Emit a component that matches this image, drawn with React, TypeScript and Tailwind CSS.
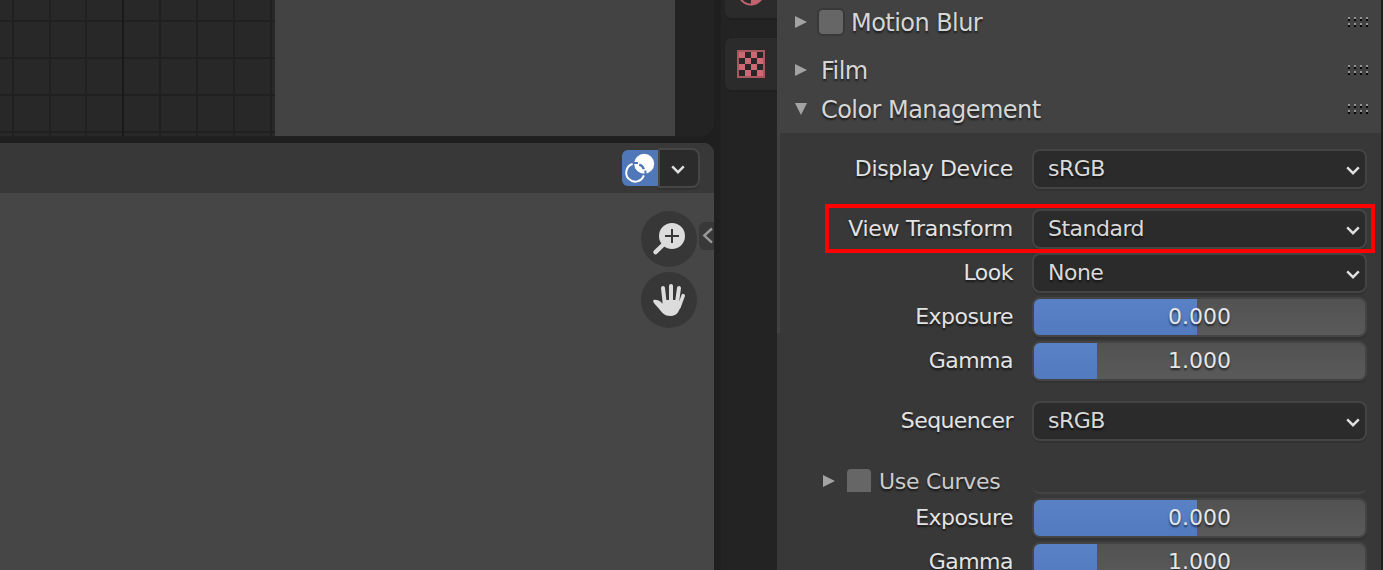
import React from "react";
import clsx from "clsx";

const TEXT_SHADOW = "[text-shadow:0_2px_2px_rgba(0,0,0,0.6)]";

const GRID_X = [12, 49, 85, 159, 196, 233, 270];
const GRID_Y = [20, 57, 94, 131];

const GridView: React.FC = () => (
    <svg width="275" height="136" className="block shrink-0 bg-[#282828]">
        {GRID_X.map((x) => (
            <rect key={x} x={x} y="0" width="2" height="136" fill="#202020" />
        ))}
        {GRID_Y.map((y) => (
            <rect key={y} x="0" y={y} width="275" height="2" fill="#202020" />
        ))}
        <rect x="122" y="0" width="2" height="136" fill="#191919" />
    </svg>
);

const Chevron: React.FC<{ className?: string }> = ({ className }) => (
    <svg width="14" height="10" viewBox="0 0 14 10" className={className}>
        <path
            d="M1.2 1.4 L7 7.2 L12.8 1.4"
            fill="none"
            stroke="#e0e0e0"
            strokeWidth="2.4"
        />
    </svg>
);

const Disclosure: React.FC<{ open?: boolean }> = ({ open }) => (
    <svg width="12" height="12" className="block shrink-0" fill="#a3a3a3">
        {open ? <path d="M0 0 H12 L6 12 Z" /> : <path d="M0 0 L12 6 L0 12 Z" />}
    </svg>
);

const DragDots: React.FC = () => (
    <svg width="20" height="10" className="block">
        {[0, 6, 12, 18].map((x) => (
            <g key={x}>
                <rect x={x} y="0" width="2" height="2" fill="#949494" />
                <rect x={x} y="2" width="2" height="2" fill="#060606" />
                <rect x={x} y="6" width="2" height="2" fill="#949494" />
                <rect x={x} y="8" width="2" height="2" fill="#060606" />
            </g>
        ))}
    </svg>
);

const OverlayIcon: React.FC = () => (
    <svg width="36" height="36" viewBox="0 0 36 36" className="block">
        <circle cx="22.2" cy="13.8" r="10" fill="#fff" />
        <path
            d="M10.6 14 A9 9 0 1 0 21.8 25.4"
            fill="none"
            stroke="#fff"
            strokeWidth="2"
        />
        <path d="M12 13 H16 M23.4 20.4 V24.4" stroke="#5078b8" strokeWidth="2" />
        <path
            d="M17.2 14.6 Q20.8 15.6 21.8 19.2"
            fill="none"
            stroke="#5078b8"
            strokeWidth="2.4"
        />
    </svg>
);

const ZoomIcon: React.FC = () => (
    <svg width="56" height="56" viewBox="0 0 56 56" className="block">
        <path
            d="M14.5 41.2 L25 31"
            stroke="#dcdcdc"
            strokeWidth="4.4"
            strokeLinecap="round"
        />
        <circle cx="31" cy="25" r="13" fill="#dcdcdc" />
        <path d="M24 25 H38 M31 18 V32" stroke="#373737" strokeWidth="2" />
    </svg>
);

const HandIcon: React.FC = () => (
    <svg width="56" height="56" viewBox="0 0 56 56" className="block">
        <g stroke="#dcdcdc" strokeWidth="4" strokeLinecap="round">
            <path d="M22 16 L23.8 32" />
            <path d="M30 14 V32" />
            <path d="M38 16 L35.8 32" />
            <path d="M42.2 23.6 L38 35" strokeWidth="3.6" />
        </g>
        <path
            d="M12.2 29.5 C11.6 27.2 15 27.6 18.2 28.8 C20 29.8 20.4 31 21.6 31.8 L22 28 H38 L40.4 32 C38.6 38.4 36.4 44 29.6 44 C23.4 44 20.8 40.6 18.2 37 C16 34.2 13 31.8 12.2 29.5 Z"
            fill="#dcdcdc"
        />
    </svg>
);

const MaterialIcon: React.FC = () => (
    <svg width="28" height="28" viewBox="0 0 28 28" className="block shrink-0">
        <circle
            cx="14"
            cy="14"
            r="12.5"
            fill="#2b2b2b"
            stroke="#c4646f"
            strokeWidth="2"
        />
        <path d="M14 14 H26 A12 12 0 0 1 14 26 Z" fill="#c4646f" />
    </svg>
);

const TextureIcon: React.FC = () => (
    <svg width="28" height="28" viewBox="0 0 28 28" className="block">
        <rect width="28" height="28" fill="#a9565f" />
        <rect x="2" y="2" width="24" height="24" fill="#2a2526" />
        {[0, 1, 2, 3].map((row) =>
            [0, 2].map((col) => (
                <rect
                    key={`${row}-${col}`}
                    x={2 + (col + (row % 2)) * 6}
                    y={2 + row * 6}
                    width="6"
                    height="6"
                    fill="#cb6a75"
                />
            ))
        )}
    </svg>
);

interface RowProps {
    label: string;
    className?: string;
    labelClassName?: string;
    highlighted?: boolean;
    children: React.ReactNode;
}

const Row: React.FC<RowProps> = ({
    label,
    className,
    labelClassName = "tracking-[-0.5px]",
    highlighted,
    children,
}) => (
    <div
        className={clsx(
            "relative flex h-10 shrink-0 items-center pr-[14px]",
            className
        )}>
        <span
            className={clsx(
                "w-[233px] text-right leading-10 text-[#e3e3e3]",
                labelClassName,
                TEXT_SHADOW
            )}>
            {label}
        </span>
        <div className="ml-[19px] h-10 w-[335px]">{children}</div>
        {highlighted && (
            <div className="absolute -top-[5px] left-[45px] h-[49px] w-[550px] border-4 border-[#fe0000]" />
        )}
    </div>
);

const Select: React.FC<{ value: string }> = ({ value }) => (
    <div className="flex h-10 items-center justify-between rounded-lg border-2 border-[#444444] bg-[#2b2b2b] pr-[5px] pl-[14px] shadow-[0_2px_0_#313131]">
        <span
            className={clsx(
                "leading-9 tracking-[-0.5px] text-[#d9d9d9]",
                TEXT_SHADOW
            )}>
            {value}
        </span>
        <Chevron className="mt-[3px]" />
    </div>
);

const Slider: React.FC<{ value: string; fill: number }> = ({ value, fill }) => (
    <div className="grid h-10 overflow-hidden rounded-lg border-2 border-[#444444] bg-linear-to-b from-[#525252] to-[#5a5a5a] shadow-[0_2px_0_#313131]">
        <div
            className="col-start-1 row-start-1 h-9 bg-linear-to-b from-[#5881c6] to-[#517abf]"
            style={{ width: fill }}
        />
        <span
            className={clsx(
                "z-10 col-start-1 row-start-1 text-center leading-9 text-[#e6e6e6]",
                TEXT_SHADOW
            )}>
            {value}
        </span>
    </div>
);

interface PanelHeaderProps {
    title: string;
    open?: boolean;
    checkbox?: boolean;
    className?: string;
}

const PanelHeader: React.FC<PanelHeaderProps> = ({
    title,
    open,
    checkbox,
    className,
}) => (
    <div
        className={clsx(
            "flex shrink-0 items-center pr-[13px] pl-[18px] text-[24px] tracking-[-0.55px] text-[#d6d6d6]",
            className
        )}>
        <Disclosure open={open} />
        {checkbox && (
            <div className="ml-[10px] size-[28px] rounded-md border-2 border-[#393939] bg-[#666666]" />
        )}
        <span
            className={clsx(
                "flex-1 pt-px leading-6 whitespace-nowrap",
                checkbox ? "ml-[6px]" : "ml-[14px]",
                TEXT_SHADOW
            )}>
            {title}
        </span>
        <DragDots />
    </div>
);

const Viewports: React.FC = () => (
    <div className="flex w-[714px] shrink-0 flex-col gap-[7px]">
        <div className="flex h-[136px] shrink-0 overflow-hidden rounded-br-[13px] bg-[#232323]">
            <GridView />
            <div className="w-[400px] bg-[#434343]" />
        </div>
        <div className="flex flex-1 flex-col overflow-hidden rounded-tr-[11px] bg-[#464646]">
            <div className="flex h-[50px] shrink-0 justify-end bg-[#383838] pt-[5px] pr-[14px]">
                <div className="mt-[2px] h-9 w-9 rounded-l-md bg-[#5078b8]">
                    <OverlayIcon />
                </div>
                <div className="flex h-10 w-[42px] items-center justify-center rounded-r-lg border-2 border-[#464646] bg-[#2b2b2b] pr-[2px] shadow-[0_2px_0_#313131]">
                    <Chevron className="mt-[3px]" />
                </div>
            </div>
            <div className="flex justify-end pt-[18px]">
                <div className="flex flex-col gap-[5px]">
                    <div className="rounded-full bg-[#373737]">
                        <ZoomIcon />
                    </div>
                    <div className="rounded-full bg-[#373737]">
                        <HandIcon />
                    </div>
                </div>
                <div className="mt-[11px] ml-[2px] h-7 w-[15px] rounded-l-md bg-[#393939]">
                    <svg width="15" height="28" className="block">
                        <path
                            d="M13 6.5 L5.3 13.6 L13 20.7"
                            fill="none"
                            stroke="#999999"
                            strokeWidth="2.4"
                        />
                    </svg>
                </div>
            </div>
        </div>
    </div>
);

const PropertyTabs: React.FC = () => (
    <div className="ml-[7px] flex w-14 shrink-0 flex-col gap-5 bg-[#232323] pl-1">
        <div className="flex h-[18px] shrink-0 flex-col justify-end overflow-hidden rounded-bl-md bg-[#2b2b2b] pb-3 pl-3 shadow-[0_2px_0_#1f1f1f]">
            <MaterialIcon />
        </div>
        <div className="flex h-[52px] shrink-0 items-center rounded-l-md bg-[#2b2b2b] pl-3 shadow-[0_0_0_1px_#202020,0_2px_0_#1f1f1f]">
            <TextureIcon />
        </div>
    </div>
);

const PropertiesPanel: React.FC = () => (
    <div className="flex w-[604px] shrink-0 flex-col bg-[#424242]">
        <PanelHeader title="Motion Blur" checkbox className="h-11" />
        <PanelHeader title="Film" className="h-[52px]" />
        <PanelHeader title="Color Management" open className="mb-[11px] h-[26px]" />
        <div className="flex min-h-0 flex-1">
            <div className="flex w-[3px] shrink-0 flex-col pt-[200px]">
                <div className="flex-1 bg-[#383838]" />
            </div>
            <div className="flex flex-1 flex-col overflow-hidden bg-[#383838] pt-4">
                <Row
                    label="Display Device"
                    labelClassName="tracking-[-0.37px]">
                    <Select value="sRGB" />
                </Row>
                <Row
                    label="View Transform"
                    labelClassName="tracking-[-0.27px]"
                    className="mt-5"
                    highlighted>
                    <Select value="Standard" />
                </Row>
                <Row label="Look" className="mt-1">
                    <Select value="None" />
                </Row>
                <Row label="Exposure" className="mt-1">
                    <Slider value="0.000" fill={163} />
                </Row>
                <Row label="Gamma" className="mt-1">
                    <Slider value="1.000" fill={63} />
                </Row>
                <Row
                    label="Sequencer"
                    labelClassName="tracking-[-0.6px]"
                    className="mt-5">
                    <Select value="sRGB" />
                </Row>
                <div className="mt-[27px] flex h-[26px] shrink-0 pl-[43px]">
                    <div className="mt-[7px]">
                        <Disclosure />
                    </div>
                    <div className="mt-px ml-3 h-[23px] w-6 rounded-t-sm bg-[#666666]" />
                    <span
                        className={clsx(
                            "ml-2 w-[153px] pt-px leading-[26px] tracking-[-0.3px] text-[#cccccc]",
                            TEXT_SHADOW
                        )}>
                        Use Curves
                    </span>
                    <div className="mt-4 h-[10px] w-[335px] rounded-b-lg border-b-2 border-[#444444]" />
                </div>
                <Row label="Exposure" className="mt-1">
                    <Slider value="0.000" fill={163} />
                </Row>
                <Row label="Gamma" className="mt-1">
                    <Slider value="1.000" fill={63} />
                </Row>
            </div>
        </div>
    </div>
);

const App: React.FC = () => {
    return (
        <div className="flex h-[570px] w-[1383px] overflow-hidden bg-[#1f1f1f] font-['DejaVu_Sans',sans-serif] text-[22px]">
            <Viewports />
            <PropertyTabs />
            <PropertiesPanel />
        </div>
    );
};

export default App;
